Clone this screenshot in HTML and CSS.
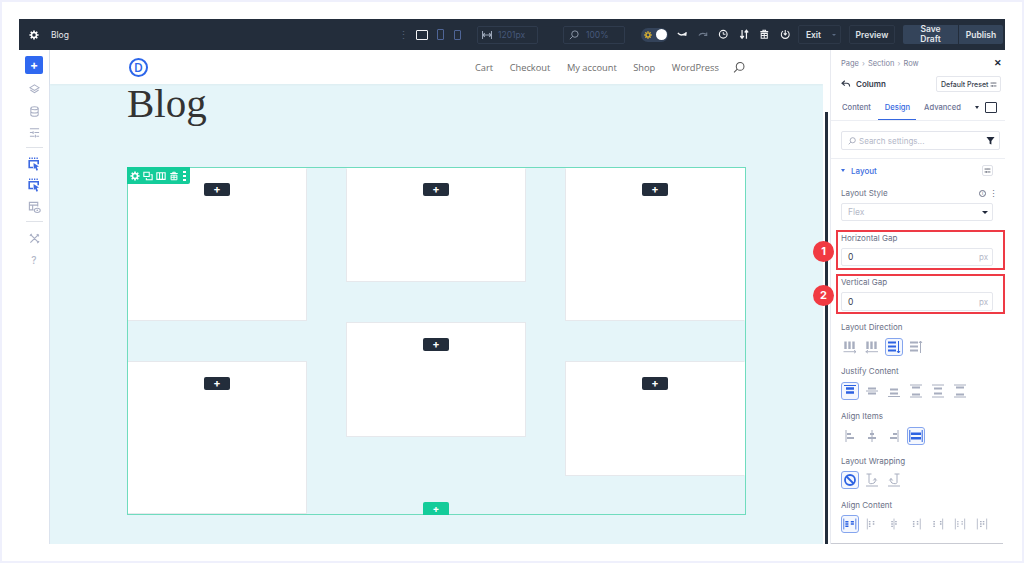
FILE: index.html
```html
<!DOCTYPE html>
<html lang="en">
<head>
<meta charset="utf-8">
<title>Blog</title>
<link rel="stylesheet" href="styles.css">
</head>
<body>
<svg class="defs" width="0" height="0">
  <symbol id="gear" viewBox="0 0 12 12"><circle cx="6" cy="6" r="3" fill="none" stroke="currentColor" stroke-width="1.800"/><path d="M6 .5v2M6 9.500v2M.5 6h2M9.500 6h2M2.100 2.100l1.400 1.400M8.500 8.500l1.400 1.400M2.100 9.900l1.400-1.400M8.500 3.500l1.400-1.400" stroke="currentColor" stroke-width="2" fill="none"/></symbol>
  <symbol id="trash" viewBox="0 0 12 12"><path d="M1.500 3h9M4.500 3V1.500h3V3M2.500 5h7v5.500h-7zM6 5v5.500M2.500 7.500h7" fill="none" stroke="currentColor" stroke-width="1.200"/></symbol>
  <symbol id="tune" viewBox="0 0 12 12"><path d="M1 3.500h5M8.500 3.500H11M1 8.500h2.500M6 8.500h5M7 2v3M4.500 7v3" fill="none" stroke="currentColor" stroke-width="1.400"/></symbol>
  <symbol id="mag" viewBox="0 0 14 14"><circle cx="8.300" cy="5.700" r="4.500" fill="none" stroke="currentColor" stroke-width="1.200"/><path d="M5 9 1.200 12.800" stroke="currentColor" stroke-width="1.200"/></symbol>
  <symbol id="pick" viewBox="0 0 12 14"><path d="M1 1.300h1.300M3.500 1.300h1.300M6 1.300h1.300M8.500 1.300h1.300" stroke="currentColor" stroke-width="1.600"/><path d="M5 10.500H1.200V3.800h9v3.400" fill="none" stroke="currentColor" stroke-width="1.600"/><path d="M5.500 6 11 9.500 8.800 10.100 10 13 8.500 13.700 7.200 10.800 5.800 12.300z" fill="currentColor"/></symbol>
  <symbol id="d-cols" viewBox="0 0 14 14"><path d="M2.500 1.500v7.500M6.500 1.500v7.500M10.500 1.500v7.500" stroke="currentColor" stroke-width="2.400"/><path d="M.5 11.700h12.500M11 10.200l2 1.500-2 1.500" fill="none" stroke="currentColor" stroke-width=".9"/></symbol>
  <symbol id="d-colsr" viewBox="0 0 14 14"><path d="M2.500 1.500v7.500M6.500 1.500v7.500M10.500 1.500v7.500" stroke="currentColor" stroke-width="2.400"/><path d="M.5 11.700h12.500M3 10.200l-2 1.500 2 1.500" fill="none" stroke="currentColor" stroke-width=".9"/></symbol>
  <symbol id="d-rows" viewBox="0 0 14 14"><path d="M1 2.500h8M1 6.500h8M1 10.500h8" stroke="currentColor" stroke-width="2.200"/><path d="M11.500 1v12M10 11l1.500 2 1.500-2" fill="none" stroke="currentColor" stroke-width="1"/></symbol>
  <symbol id="d-rowsr" viewBox="0 0 14 14"><path d="M1 2.500h8M1 6.500h8M1 10.500h8" stroke="currentColor" stroke-width="2.200"/><path d="M11.500 1v12M10 3l1.500-2 1.500 2" fill="none" stroke="currentColor" stroke-width="1"/></symbol>
  <symbol id="j1" viewBox="0 0 14 14"><path d="M1 1.500h12" stroke="currentColor" stroke-width="1"/><path d="M3 4.500h8M3 8.500h8" stroke="currentColor" stroke-width="2.400"/></symbol>
  <symbol id="j2" viewBox="0 0 14 14"><path d="M1 7h12" stroke="currentColor" stroke-width="1"/><path d="M3 4.500h8M3 9.500h8" stroke="currentColor" stroke-width="2.200"/></symbol>
  <symbol id="j3" viewBox="0 0 14 14"><path d="M1 12.500h12" stroke="currentColor" stroke-width="1"/><path d="M3 5.500h8M3 9.500h8" stroke="currentColor" stroke-width="2.200"/></symbol>
  <symbol id="j4" viewBox="0 0 14 14"><path d="M1 1h12M1 13h12" stroke="currentColor" stroke-width="1"/><path d="M3 3.500h8M3 10.500h8" stroke="currentColor" stroke-width="2.200"/></symbol>
  <symbol id="j5" viewBox="0 0 14 14"><path d="M1 1h12M1 13h12" stroke="currentColor" stroke-width="1"/><path d="M3 4.500h8M3 9.500h8" stroke="currentColor" stroke-width="2.200"/></symbol>
  <symbol id="a1" viewBox="0 0 14 14"><path d="M3 1v12" stroke="currentColor" stroke-width="1"/><path d="M4 5h4M4 9h7" stroke="currentColor" stroke-width="2.200"/></symbol>
  <symbol id="a2" viewBox="0 0 14 14"><path d="M7 1v12" stroke="currentColor" stroke-width="1"/><path d="M5 5h4M3 9h8" stroke="currentColor" stroke-width="2.200"/></symbol>
  <symbol id="a3" viewBox="0 0 14 14"><path d="M11 1v12" stroke="currentColor" stroke-width="1"/><path d="M6 5h4M3 9h7" stroke="currentColor" stroke-width="2.200"/></symbol>
  <symbol id="a4" viewBox="0 0 14 14"><path d="M.8 1v12M13.200 1v12" stroke="currentColor" stroke-width="1"/><path d="M2 4.800h10M2 9.200h10" stroke="currentColor" stroke-width="2.400"/></symbol>
  <symbol id="w1" viewBox="0 0 14 14"><circle cx="7" cy="7" r="5" fill="none" stroke="currentColor" stroke-width="1.800"/><path d="M3.500 3.500l7 7" stroke="currentColor" stroke-width="1.800"/></symbol>
  <symbol id="w2" viewBox="0 0 14 14"><path d="M1 13h12" stroke="currentColor" stroke-width="1"/><path d="M1.500 1h5M4 1v8.500c0 1.500 3 1.500 5 .5s1-3 1-4.500M8.300 7.500 10 5.500l1.700 2" fill="none" stroke="currentColor" stroke-width="1"/></symbol>
  <symbol id="w3" viewBox="0 0 14 14"><path d="M1 13h12" stroke="currentColor" stroke-width="1"/><path d="M7.500 1h5M10 1v8.500c0 1.500-3 1.500-5 .5s-1-3-1-4.500M2.300 7.500 4 5.500l1.700 2" fill="none" stroke="currentColor" stroke-width="1"/></symbol>
  <symbol id="c1" viewBox="0 0 18 18"><path d="M1 2v14" stroke="currentColor" stroke-width="1"/><path d="M3 6h4M3 9h4M3 12h4M10 6h4M10 9h4" stroke="currentColor" stroke-width="2"/><path d="M16.500 2v14" stroke="currentColor" stroke-width="1"/></symbol>
  <symbol id="c2" viewBox="0 0 14 18"><path d="M1 2v14" stroke="currentColor" stroke-width="1"/><path d="M3 6h2M3 9h2M3 12h2M8 6h2M8 9h2" stroke="currentColor" stroke-width="1.700"/></symbol>
  <symbol id="c3" viewBox="0 0 14 18"><path d="M7 2v14" stroke="currentColor" stroke-width="1"/><path d="M3.500 6h2M3.500 9h2M3.500 12h2M8.500 6h2M8.500 9h2" stroke="currentColor" stroke-width="1.700"/></symbol>
  <symbol id="c4" viewBox="0 0 14 18"><path d="M12.500 2v14" stroke="currentColor" stroke-width="1"/><path d="M3 6h2M3 9h2M3 12h2M8 6h2M8 9h2" stroke="currentColor" stroke-width="1.700"/></symbol>
  <symbol id="c5" viewBox="0 0 14 18"><path d="M13 2v14" stroke="currentColor" stroke-width="1"/><path d="M1 6h2M1 9h2M1 12h2M9.500 6h2M9.500 9h2" stroke="currentColor" stroke-width="1.700"/></symbol>
  <symbol id="c6" viewBox="0 0 14 18"><path d="M1 2v14M13 2v14" stroke="currentColor" stroke-width="1"/><path d="M3.500 6h1.500M3.500 9h1.500M3.500 12h1.500M9 6h1.500M9 9h1.500" stroke="currentColor" stroke-width="1.700"/></symbol>
  <symbol id="c7" viewBox="0 0 14 18"><path d="M1 2v14M13 2v14" stroke="currentColor" stroke-width="1"/><path d="M4.500 6h2M4.500 9h2M4.500 12h2M8 6h2M8 9h2" stroke="currentColor" stroke-width="1.700"/></symbol>
</svg>

<div class="app">
  <header class="topbar">
    <svg class="tb-gear"><use href="#gear"/></svg>
    <span class="tb-title">Blog</span>
    <span class="tb-dots">⋮</span>
    <div class="devices">
      <span class="dev dev-desktop"></span>
      <span class="dev dev-tablet"></span>
      <span class="dev dev-phone"></span>
    </div>
    <div class="tb-field tb-field-width">
      <svg class="tb-field-icon" viewBox="0 0 10 10"><path d="M.5 1v8M9.500 1v8M1 5h8M2.800 3.200 1 5l1.800 1.800M7.200 3.200 9 5 7.200 6.800" fill="none" stroke="currentColor" stroke-width="1.100"/></svg>
      <span>1201px</span>
    </div>
    <div class="tb-field tb-field-zoom">
      <svg class="tb-field-icon tb-mag"><use href="#mag"/></svg>
      <span>100%</span>
    </div>
    <div class="toggle">
      <svg class="sun"><use href="#gear"/></svg>
      <span class="knob"></span>
    </div>
    <div class="tb-actions">
      <svg class="tb-icon" viewBox="0 0 12 12"><path d="M1 4.500c2 3 5 3 9 .5M10.500 3.500 10 7l-3-.5" fill="none" stroke="currentColor" stroke-width="1.500"/></svg>
      <svg class="tb-icon tb-icon-dim" viewBox="0 0 12 12"><path d="M1 7.500c2-3 5-3 8.500-1.500M10 4v3.500H7" fill="none" stroke="currentColor" stroke-width="1.200"/></svg>
      <svg class="tb-icon" viewBox="0 0 12 12"><circle cx="6" cy="6" r="4.400" fill="none" stroke="currentColor" stroke-width="1.300"/><path d="M6 3.500V6h2.500" fill="none" stroke="currentColor" stroke-width="1.100"/></svg>
      <svg class="tb-icon" viewBox="0 0 12 12"><path d="M3.500 1v9.500M1.500 8l2 2.500L5.500 8M8.500 11V1.500M6.500 4l2-2.500 2 2.500" fill="none" stroke="currentColor" stroke-width="1.400"/></svg>
      <svg class="tb-icon"><use href="#trash"/></svg>
      <svg class="tb-icon" viewBox="0 0 12 12"><path d="M3.500 2.500a4.500 4.500 0 1 0 5 0M6 1v5.500M4.300 5 6 6.800 7.700 5" fill="none" stroke="currentColor" stroke-width="1.200"/></svg>
    </div>
    <div class="tb-exit">
      <span class="tb-exit-label">Exit</span>
      <span class="tb-exit-caret"></span>
    </div>
    <span class="tb-preview">Preview</span>
    <div class="tb-publish">
      <span class="tb-save">Save<br>Draft</span>
      <span class="tb-pub">Publish</span>
    </div>
  </header>

  <div class="workspace">
    <nav class="rail">
      <span class="rail-add">+</span>
      <svg class="rail-icon" viewBox="0 0 12 12"><path d="M6 1 11 4 6 7 1 4zM1.500 6.500 6 9.500l4.500-3" fill="none" stroke="currentColor" stroke-width="1.100"/></svg>
      <svg class="rail-icon" viewBox="0 0 12 12"><ellipse cx="6" cy="2.500" rx="4" ry="1.700" fill="none" stroke="currentColor" stroke-width="1.100"/><path d="M2 2.500v7c0 2.200 8 2.200 8 0v-7M2 6c0 2.200 8 2.200 8 0" fill="none" stroke="currentColor" stroke-width="1.100"/></svg>
      <svg class="rail-icon" viewBox="0 0 12 12"><path d="M1 2h10M1 6h3M6 6h5M1 10h5M8 10h3M7 8.500v3M4.500 4.500v3" fill="none" stroke="currentColor" stroke-width="1.100"/></svg>
      <span class="rail-sep rail-sep-first"></span>
      <svg class="rail-icon rail-blue"><use href="#pick"/></svg>
      <svg class="rail-icon rail-blue"><use href="#pick"/></svg>
      <svg class="rail-icon rail-eye" viewBox="0 0 14 14"><path d="M6 9.500H1.500V1.500h9V6M1.500 4.500h9M5 4.500v5" fill="none" stroke="currentColor" stroke-width="1.200"/><ellipse cx="10" cy="10" rx="3.200" ry="2.300" fill="none" stroke="currentColor" stroke-width="1.100"/><circle cx="10" cy="10" r=".9" fill="currentColor"/></svg>
      <span class="rail-sep rail-sep-last"></span>
      <svg class="rail-icon" viewBox="0 0 12 12"><path d="M1.500 1.500l9 9M10.500 1.500l-9 9M1 3l2-2M9 11l2-2M8.500 1.200l2.300 2.300" fill="none" stroke="currentColor" stroke-width="1.300"/></svg>
      <span class="rail-help">?</span>
    </nav>

    <main class="canvas">
      <div class="site-header">
        <div class="logo">D</div>
        <ul class="site-nav">
          <li>Cart</li>
          <li>Checkout</li>
          <li>My account</li>
          <li>Shop</li>
          <li>WordPress</li>
        </ul>
        <svg class="site-search"><use href="#mag"/></svg>
      </div>
      <div class="page">
        <h1 class="page-title">Blog</h1>
        <section class="row">
          <div class="row-tools">
            <svg class="rt-icon"><use href="#gear"/></svg>
            <svg class="rt-icon" viewBox="0 0 12 12"><path d="M1 1.500h6.500v5H1zM4 8.500v2h7v-6H9" fill="none" stroke="currentColor" stroke-width="1.300"/></svg>
            <svg class="rt-icon" viewBox="0 0 12 12"><path d="M1 2h10v8H1zM4.300 2v8M7.700 2v8" fill="none" stroke="currentColor" stroke-width="1.300"/></svg>
            <svg class="rt-icon"><use href="#trash"/></svg>
            <span class="rt-dots"></span>
          </div>
          <div class="col col-left">
            <div class="card card-tall"><span class="add">+</span></div>
            <div class="card card-tall"><span class="add">+</span></div>
          </div>
          <div class="col col-mid">
            <div class="card card-short"><span class="add">+</span></div>
            <div class="card card-short"><span class="add">+</span></div>
          </div>
          <div class="col col-right">
            <div class="card card-tall"><span class="add">+</span></div>
            <div class="card card-short"><span class="add">+</span></div>
          </div>
          <span class="row-add">+</span>
        </section>
      </div>
    </main>

    <div class="scroll-track"><span class="scroll-thumb"></span></div>

    <aside class="panel">
      <div class="crumbs"><span>Page</span><i>›</i><span>Section</span><i>›</i><span>Row</span><b class="close">✕</b></div>
      <div class="panel-head">
        <svg class="back" viewBox="0 0 12 10"><path d="M4.500 1 1 4l3.500 3M1 4h6c2.500 0 3.500 1.500 3.500 4" fill="none" stroke="currentColor" stroke-width="1.400"/></svg>
        <span class="panel-title">Column</span>
        <span class="preset">Default Preset <svg class="tune-sm"><use href="#tune"/></svg></span>
      </div>
      <div class="tabs">
        <span class="tab">Content</span>
        <span class="tab tab-on">Design</span>
        <span class="tab">Advanced</span>
        <span class="tab-caret"></span>
        <span class="tab-box"></span>
      </div>
      <div class="search-wrap">
        <div class="search">
          <svg class="search-mag"><use href="#mag"/></svg>
          <span>Search settings...</span>
          <svg class="funnel" viewBox="0 0 10 10"><path d="M.5 1h9L6 5.500V9.500L4 8.500V5.500z" fill="currentColor"/></svg>
        </div>
      </div>
      <div class="group">
        <div class="group-head">
          <span class="caret-blue"></span>
          <span class="group-title">Layout</span>
          <span class="group-tune"><svg class="tune-sm"><use href="#tune"/></svg></span>
        </div>
        <div class="lbl lbl-meta"><span>Layout Style</span><span class="meta"><span class="info">i</span><span class="vdots">⋮</span></span></div>
        <div class="select"><span>Flex</span><span class="sel-caret"></span></div>
        <div class="lbl lbl-gap">Horizontal Gap</div>
        <div class="input"><span>0</span><span class="unit">px</span></div>
        <div class="lbl lbl-gap2">Vertical Gap</div>
        <div class="input input-tall"><span>0</span><span class="unit">px</span></div>

        <div class="lbl lbl-set">Layout Direction</div>
        <div class="opts">
          <span class="opt"><svg><use href="#d-cols"/></svg></span>
          <span class="opt"><svg><use href="#d-colsr"/></svg></span>
          <span class="opt opt-on"><svg><use href="#d-rows"/></svg></span>
          <span class="opt"><svg><use href="#d-rowsr"/></svg></span>
        </div>
        <div class="lbl lbl-tight">Justify Content</div>
        <div class="opts">
          <span class="opt opt-on"><svg><use href="#j1"/></svg></span>
          <span class="opt"><svg><use href="#j2"/></svg></span>
          <span class="opt"><svg><use href="#j3"/></svg></span>
          <span class="opt"><svg><use href="#j4"/></svg></span>
          <span class="opt"><svg><use href="#j5"/></svg></span>
          <span class="opt"><svg><use href="#j4"/></svg></span>
        </div>
        <div class="lbl lbl-set">Align Items</div>
        <div class="opts">
          <span class="opt"><svg><use href="#a1"/></svg></span>
          <span class="opt"><svg><use href="#a2"/></svg></span>
          <span class="opt"><svg><use href="#a3"/></svg></span>
          <span class="opt opt-on"><svg><use href="#a4"/></svg></span>
        </div>
        <div class="lbl lbl-set">Layout Wrapping</div>
        <div class="opts opts-close">
          <span class="opt opt-on"><svg><use href="#w1"/></svg></span>
          <span class="opt"><svg><use href="#w2"/></svg></span>
          <span class="opt"><svg><use href="#w3"/></svg></span>
        </div>
        <div class="lbl lbl-set">Align Content</div>
        <div class="opts opts-close">
          <span class="opt opt-on"><svg><use href="#c1"/></svg></span>
          <span class="opt"><svg><use href="#c2"/></svg></span>
          <span class="opt"><svg><use href="#c3"/></svg></span>
          <span class="opt"><svg><use href="#c4"/></svg></span>
          <span class="opt"><svg><use href="#c5"/></svg></span>
          <span class="opt"><svg><use href="#c6"/></svg></span>
          <span class="opt"><svg><use href="#c7"/></svg></span>
        </div>
      </div>
      <span class="mark mark-1"></span>
      <span class="mark mark-2"></span>
      <span class="badge badge-1">1</span>
      <span class="badge badge-2">2</span>
    </aside>
  </div>
</div>
</body>
</html>
```
FILE: styles.css
```css
* { box-sizing: border-box; }
html, body { margin: 0; height: 100%; }
body {
  width: 1024px;
  height: 563px;
  overflow: hidden;
  background: #fff;
  border: 2px solid #eff0fc;
  padding: 17px;
  font-family: "Inter", "Liberation Sans", sans-serif;
  position: relative;
}
.defs { position: absolute; }
svg { display: block; }

.app { width: 986px; height: 525px; display: flex; flex-direction: column; }

/* top bar */
.topbar {
  height: 31px;
  flex: none;
  background: #232d3b;
  color: #fff;
  display: flex;
  align-items: center;
}
.tb-gear { width: 10px; height: 10px; margin-left: 10px; }
.tb-title { font-size: 8.5px; margin-left: 12px; color: #e6e8ec; width: 24px; }
.tb-dots { color: #566277; font-size: 11px; margin-left: 323px; width: 6px; text-align: center; }
.devices { display: flex; align-items: center; margin-left: 12px; }
.dev { display: block; border: 1px solid #4f6597; border-radius: 1px; }
.dev-desktop { width: 12px; height: 10px; border: 1.5px solid #f2f3f5; }
.dev-tablet { width: 7px; height: 11px; margin-left: 9px; }
.dev-phone { width: 7px; height: 10px; margin-left: 10px; }
.tb-field {
  height: 18px;
  border: 1px solid #2f3b4d;
  border-radius: 2px;
  display: flex;
  align-items: center;
  font-size: 8.5px;
  color: #46587a;
}
.tb-field-width { width: 61px; margin-left: 16px; padding-left: 4px; gap: 6px; }
.tb-field-zoom { width: 62px; margin-left: 25px; padding-left: 5px; gap: 7px; }
.tb-field-icon { width: 10px; height: 10px; color: #9aa5b7; flex: none; }
.toggle {
  width: 27px;
  height: 14px;
  margin-left: 16px;
  border-radius: 7px;
  background: #34435a;
  position: relative;
}
.sun { position: absolute; left: 3px; top: 3px; width: 8px; height: 8px; color: #e5b92e; }
.knob { position: absolute; right: 1px; top: 1.5px; width: 11px; height: 11px; border-radius: 50%; background: #fff; }
.tb-actions { display: flex; align-items: center; gap: 10px; margin-left: 9px; }
.tb-icon { width: 10.5px; height: 10.5px; color: #f2f3f5; }
.tb-icon-dim { color: #6f7b8d; }
.tb-exit {
  display: flex;
  height: 19px;
  width: 43px;
  margin-left: 8px;
  border: 1px solid #2d3848;
  border-radius: 2px;
  align-items: center;
  font-size: 8.5px;
  font-weight: 600;
  color: #dfe2e6;
}
.tb-exit-label { width: 29px; text-align: center; }
.tb-exit-caret { width: 0; height: 0; margin-left: 4px; border: 2px solid transparent; border-top: 2.5px solid #5a6a82; border-bottom: 0; }
.tb-preview {
  display: flex;
  align-items: center;
  justify-content: center;
  width: 46px;
  height: 19px;
  margin-left: 8px;
  border: 1px solid #2d3848;
  border-radius: 2px;
  font-size: 8.5px;
  font-weight: 600;
  color: #dfe2e6;
}
.tb-publish { display: flex; height: 19px; margin-left: 8px; font-size: 8.5px; font-weight: 600; color: #e4e7ea; }
.tb-save {
  width: 55px;
  height: 19px;
  background: #34445a;
  border-radius: 2px 0 0 2px;
  text-align: center;
  line-height: 9.5px;
}
.tb-pub {
  width: 44px;
  margin-left: 1px;
  background: #34445a;
  border-radius: 0 2px 2px 0;
  display: flex;
  align-items: center;
  justify-content: center;
}

/* body */
.workspace { flex: 1; display: flex; min-height: 0; position: relative; }
.rail {
  width: 31px;
  flex: none;
  background: #fff;
  border-right: 1px solid #dbe3ee;
  display: flex;
  flex-direction: column;
  align-items: center;
  padding-top: 6px;
  color: #a9afc4;
}
.rail-add {
  width: 18px;
  height: 18px;
  border-radius: 2px;
  background: #2f68f0;
  color: #fff;
  font-size: 12px;
  font-weight: 700;
  line-height: 17px;
  text-align: center;
  margin-bottom: 10px;
}
.rail-icon { width: 11px; height: 11px; margin-bottom: 10.5px; flex: none; }
.rail-blue { color: #3d69e2; height: 14px; width: 12px; margin-bottom: 7px; }
.rail-eye { width: 13px; height: 13px; margin-top: 2px; margin-bottom: 8.5px; }
.rail-sep { width: 17px; height: 1px; background: #dfe2e8; margin-top: -1.5px; }
.rail-sep-first { margin-bottom: 9px; }
.rail-sep-last { margin-bottom: 11px; }
.rail-help { font-size: 10px; line-height: 11px; font-weight: 500; color: #b3b8c9; }

.canvas {
  width: 773px;
  flex: none;
  background: #e5f5f9;
  display: flex;
  flex-direction: column;
}
.site-header {
  height: 34px;
  flex: none;
  background: #fff;
  display: flex;
  align-items: center;
  padding-left: 79px;
  box-shadow: 0 1px 2px rgba(0, 0, 0, .04);
}
.logo {
  width: 19px;
  height: 19px;
  margin-top: 1px;
  border: 2px solid #2c66ea;
  border-radius: 50%;
  color: #2c66ea;
  font-size: 12px;
  font-weight: 600;
  line-height: 15px;
  text-align: center;
  font-family: "Open Sans", sans-serif;
}
.site-nav {
  list-style: none;
  margin: 0 0 0 327px;
  padding: 0;
  display: flex;
  gap: 16.5px;
  font-family: "Open Sans", sans-serif;
  font-size: 9.3px;
  font-weight: 500;
  color: #6d6d6d;
}
.site-search { width: 12px; height: 13px; margin-left: 14px; color: #555; }

.page { padding-left: 77px; flex: 1; }
.page-title {
  margin: 0;
  height: 83px;
  font-family: "Liberation Serif", serif;
  font-size: 41px;
  font-weight: 400;
  line-height: 38px;
  color: #333;
}
.row {
  width: 619px;
  height: 348px;
  padding-top: 1px;
  outline: 1px solid #6fdcbe;
  outline-offset: -1px;
  display: flex;
  gap: 39px;
  position: relative;
}
.col { width: 180px; display: flex; flex-direction: column; gap: 40px; flex: none; }
.col-left .card { border-left-color: transparent; }
.col-right .card { border-right-color: transparent; }
.card {
  background: #fff;
  border: 1px solid #e6e8ec;
  display: flex;
  justify-content: center;
  padding-top: 15px;
}
.card:first-child { border-top-color: transparent; padding-top: 14px; }
.card-tall { height: 153px; }
.card-short { height: 115px; }
.col-mid .card:first-child { height: 114px; }
.add {
  width: 26px;
  height: 13px;
  border-radius: 2px;
  background: #232d3b;
  color: #fff;
  font-size: 11px;
  font-weight: 700;
  line-height: 12px;
  text-align: center;
}
.row-tools {
  position: absolute;
  left: 0;
  top: 0;
  width: 63px;
  height: 17px;
  background: #14cc9a;
  border-radius: 0 0 2px 0;
  color: #fff;
  display: flex;
  align-items: center;
  padding-left: 3px;
  gap: 3px;
}
.rt-icon { width: 10px; height: 10px; }
.rt-dots { width: 3px; height: 11px; margin-left: 1px; background: radial-gradient(circle at center, #fff 1.3px, transparent 1.4px) 0 0 / 3px 4px; }
.row-add {
  position: absolute;
  left: 296px;
  bottom: 0;
  width: 26px;
  height: 13px;
  background: #14cc9a;
  border-radius: 2px 2px 0 0;
  color: #fff;
  font-size: 10px;
  font-weight: 700;
  line-height: 12px;
  text-align: center;
}

.scroll-track { width: 7px; flex: none; background: #fff; padding: 62px 2px 0; }
.scroll-thumb { display: block; width: 3px; height: 100%; background: #232d3b; }

/* settings panel */
.panel {
  flex: 1;
  min-width: 0;
  background: #fff;
  border-left: 1px solid #e8eaf0;
  position: relative;
  color: #6a7086;
}
.panel::after {
  content: "";
  position: absolute;
  left: 0;
  right: 2px;
  bottom: 0;
  height: 1px;
  background: #c9cbd3;
}
.crumbs {
  height: 26px;
  padding: 0 0 0 10px;
  display: flex;
  align-items: center;
  gap: 3px;
  font-size: 7.5px;
  color: #7c829b;
  position: relative;
}
.crumbs i { font-style: normal; color: #a6abbc; }
.close { position: absolute; right: 3px; top: 7px; font-size: 9px; color: #20283a; font-weight: 700; line-height: 12px; }
.panel-head { height: 16px; display: flex; align-items: center; padding-left: 10px; color: #363d4c; }
.back { width: 10px; height: 8px; }
.panel-title { margin-left: 5px; font-size: 8px; font-weight: 600; }
.preset {
  margin-left: auto;
  margin-right: 4px;
  width: 65px;
  height: 16px;
  border: 1px solid #e4e6ec;
  border-radius: 2px;
  display: flex;
  align-items: center;
  padding-left: 4px;
  gap: 2px;
  font-size: 7px;
  font-weight: 500;
  white-space: nowrap;
}
.tune-sm { width: 7px; height: 7px; flex: none; color: #4a5060; }
.tabs {
  height: 29px;
  display: flex;
  align-items: center;
  padding: 2px 0 0 11px;
  border-bottom: 1px solid #eceef3;
  font-size: 7.6px;
  font-weight: 500;
  color: #6b7294;
}
.tab { margin-right: 14px; }
.tab-on { color: #3567e0; position: relative; }
.tab-on::after {
  content: "";
  position: absolute;
  left: -7px;
  right: -6px;
  bottom: -8.5px;
  height: 1.5px;
  background: #3567e0;
}
.tab-caret { width: 0; height: 0; margin-right: 6px; border: 2.5px solid transparent; border-top: 3px solid #2a3244; border-bottom: 0; }
.tab-box { width: 12px; height: 11px; border: 1.5px solid #2a3244; border-radius: 1px; }
.search-wrap { height: 38px; padding: 10px 5px 0 10px; border-bottom: 1px solid #eceef3; }
.search {
  height: 19px;
  border: 1px solid #e3e5ec;
  border-radius: 2px;
  display: flex;
  align-items: center;
  padding: 0 4px 0 6px;
  font-size: 8px;
  color: #b3b7c8;
}
.search-mag { width: 8px; height: 8px; margin-right: 3px; color: #8a90a6; }
.funnel { width: 9px; height: 9px; margin-left: auto; color: #20283a; }

.group { padding: 0 12px 0 10px; }
.group-head { height: 23px; display: flex; align-items: center; font-size: 8px; font-weight: 500; color: #3d6ee0; }
.caret-blue { width: 0; height: 0; margin-right: 6px; border: 2.5px solid transparent; border-top: 3px solid #3d6ee0; border-bottom: 0; }
.group-tune {
  margin-left: auto;
  width: 11px;
  height: 11px;
  border: 1px solid #dfe1e8;
  border-radius: 2px;
  display: flex;
  align-items: center;
  justify-content: center;
}
.lbl { font-size: 8px; line-height: 10px; color: #6a7086; }
.lbl-meta { display: flex; justify-content: space-between; align-items: center; margin-top: 6px; }
.meta { display: flex; align-items: center; gap: 3px; }
.info {
  width: 7px;
  height: 7px;
  border: 1px solid #6a7086;
  border-radius: 50%;
  font-size: 5px;
  line-height: 5px;
  text-align: center;
}
.vdots { font-size: 9px; line-height: 9px; width: 4px; text-align: center; }
.select, .input {
  height: 18px;
  margin-top: 5px;
  border: 1px solid #e5e7ed;
  border-radius: 2px;
  display: flex;
  align-items: center;
  justify-content: space-between;
  padding: 0 4px 0 6px;
  font-size: 8.5px;
}
.select { color: #b5b9c8; }
.sel-caret { border: 3px solid transparent; border-top: 3.5px solid #20283a; border-bottom: 0; }
.input { color: #3b4050; }
.input-tall { height: 19px; }
.unit { color: #b5b9c8; font-size: 8px; }
.lbl-gap { margin-top: 12px; }
.lbl-gap2 { margin-top: 11px; }
.lbl-tight { margin-top: 10px; }
.lbl-set { margin-top: 11px; }
.opts { display: flex; gap: 4px; margin-top: 6px; height: 18px; }
.opts-close { margin-top: 5px; }
.opt {
  width: 18px;
  height: 18px;
  border-radius: 3px;
  color: #a8aebf;
  display: flex;
  align-items: center;
  justify-content: center;
  flex: none;
}
.opt svg { width: 14px; height: 14px; }
.opt-on { border: 1.5px solid #85a5ee; background: #f4f7fe; color: #2c62e2; }

.mark {
  position: absolute;
  left: 5px;
  width: 169px;
  border: 2px solid #ee3a45;
}
.mark-1 { top: 180px; height: 40px; }
.mark-2 { top: 224px; height: 40px; }
.badge {
  position: absolute;
  left: -18px;
  width: 21px;
  height: 21px;
  border-radius: 50%;
  background: #f13a42;
  color: #fff;
  font-size: 11px;
  font-weight: 700;
  line-height: 21px;
  text-align: center;
}
.badge-1 { top: 191px; }
.badge-2 { top: 235px; }
```
